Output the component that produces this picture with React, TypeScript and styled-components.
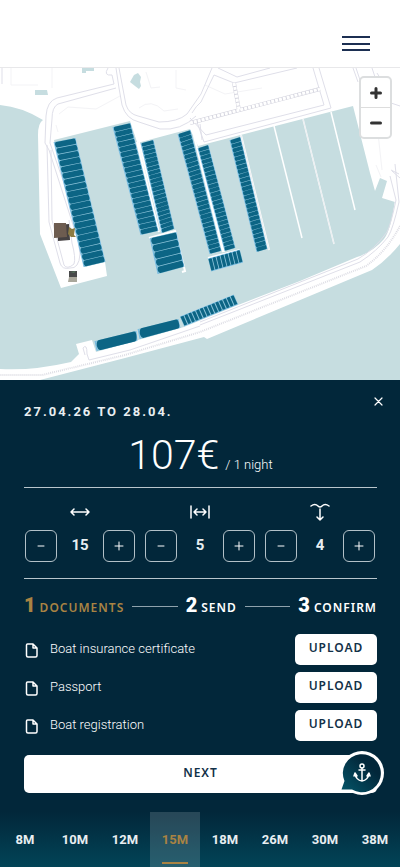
import React, { useState } from "react";
import styled, { createGlobalStyle, css } from "styled-components";

const navy = "#02273a";
const gold = "#a98343";

const GlobalStyle = createGlobalStyle`
  *, *::before, *::after { box-sizing: border-box; }
  body { margin: 0; background: ${navy}; font-family: Roboto, "Liberation Sans", sans-serif; color: #fff; }
  button { font: inherit; color: inherit; padding: 0; border: 0; background: none; cursor: pointer; }
  svg { display: block; }
`;

const Page = styled.div`
  display: flex;
  flex-direction: column;
  min-height: 100vh;
`;

const Header = styled.header`
  display: flex;
  justify-content: flex-end;
  padding: 36px 30px 16px;
  background: #fff;
  border-bottom: 1px solid #e8e8ea;
`;

const MenuButton = styled.button`
  display: flex;
  flex-direction: column;
  justify-content: space-between;
  width: 28px;
  height: 15px;
  span { height: 2px; background: #1c2f52; }
`;

const MapArea = styled.section`
  position: relative;
  background: #c6dde0;
`;

const MapSvg = styled.svg`
  width: 100%;
  height: auto;
`;

const ZoomGroup = styled.div`
  position: absolute;
  top: 8px;
  right: 8px;
  display: flex;
  flex-direction: column;
  border: 2px solid #dcdedf;
  border-radius: 5px;
  background: #fff;
  overflow: hidden;
`;

const ZoomButton = styled.button`
  display: grid;
  place-items: center;
  width: 29px;
  height: 29px;
  & + & { height: 30px; border-top: 1px solid #ddd; }
`;

const Panel = styled.main`
  position: relative;
  flex: 1;
  padding: 24px 23px 19px 24px;
  background: ${navy};
`;

const CloseButton = styled.button`
  position: absolute;
  top: 14px;
  right: 14px;
  padding: 3px;
`;

const Dates = styled.h1`
  margin: 0;
  font-size: 13px;
  font-weight: 700;
  line-height: 16px;
  letter-spacing: 2px;
  color: #e8eef1;
`;

const PriceRow = styled.p`
  display: flex;
  justify-content: center;
  align-items: baseline;
  gap: 6px;
  margin: 14px 0 1px;
  line-height: 42px;
`;

const Price = styled.strong`
  font-size: 41px;
  font-weight: 300;
`;

const Per = styled.span`
  font-size: 13px;
  font-weight: 300;
`;

const Rule = styled.hr`
  height: 1px;
  margin: 0;
  border: 0;
  background: #b9c6cc;
`;

const Dimensions = styled.div`
  display: grid;
  grid-template-columns: repeat(3, 1fr);
  gap: 10px;
  padding: 14px 2px 16px 1px;
`;

const Dimension = styled.div`
  display: grid;
  grid-template-columns: 32px 1fr 32px;
  row-gap: 8px;
  align-items: center;
  justify-items: center;
  svg { grid-column: 1 / -1; }
  output { font-size: 15px; font-weight: 700; line-height: 18px; padding-bottom: 2px; color: #e8eef1; }
`;

const StepButton = styled.button`
  display: grid;
  place-items: center;
  width: 32px;
  height: 32px;
  border: 1px solid #b3c1c8;
  border-radius: 6px;
  svg { grid-column: auto; }
`;

const Steps = styled.ol`
  display: flex;
  align-items: center;
  gap: 8px;
  margin: 0;
  padding: 14px 0 14px;
  list-style: none;
`;

const Step = styled.li<{ $active?: boolean }>`
  display: flex;
  align-items: baseline;
  gap: 4px;
  color: ${(p) => (p.$active ? gold : "#fff")};
  font-family: "Noto Sans", sans-serif;
  font-size: 12px;
  font-weight: 600;
  line-height: 24px;
  letter-spacing: 1px;
  b { font-family: Roboto, sans-serif; font-weight: 900; font-size: 20px; letter-spacing: 0; }
`;

const StepLine = styled.li`
  flex: 1;
  height: 1px;
  background: #8fa2ac;
`;

const Documents = styled.ul`
  display: grid;
  gap: 7px;
  margin: 0;
  padding: 0;
  list-style: none;
`;

const DocumentRow = styled.li`
  display: flex;
  align-items: center;
  gap: 11px;
  font-size: 13px;
  font-weight: 300;
  line-height: 20px;
  span { flex: 1; padding-bottom: 2px; }
`;

const whiteButton = css`
  border-radius: 5px;
  background: #fff;
  color: #123148;
  font-family: "Noto Sans", sans-serif;
  font-size: 12px;
  font-weight: 600;
  letter-spacing: 1px;
`;

const UploadButton = styled.button`
  ${whiteButton}
  width: 82px;
  height: 31px;
  padding-bottom: 3px;
`;

const NextButton = styled.button`
  ${whiteButton}
  display: block;
  width: 100%;
  height: 38px;
  margin-top: 14px;
  padding-bottom: 3px;
`;

const ChatButton = styled.button`
  position: absolute;
  right: 16px;
  bottom: 17px;
`;

const Tabs = styled.nav`
  display: grid;
  grid-template-columns: repeat(8, 1fr);
  background: linear-gradient(${navy}, #024457);
`;

const Tab = styled.button<{ $active: boolean }>`
  display: flex;
  flex-direction: column;
  align-items: center;
  justify-content: space-between;
  height: 55px;
  padding: 19px 0 3px;
  font-size: 13px;
  font-weight: 700;
  line-height: 18px;
  color: ${(p) => (p.$active ? gold : "#e8eef1")};
  background: ${(p) => (p.$active ? "rgba(255,255,255,0.15)" : "none")};
  &::after {
    content: "";
    width: 26px;
    height: 2px;
    background: ${(p) => (p.$active ? gold : "transparent")};
  }
`;

type Point = [number, number];
type Quad = [Point, Point, Point, Point];

const mix = (a: Point, b: Point, t: number): Point => [a[0] + (b[0] - a[0]) * t, a[1] + (b[1] - a[1]) * t];

// Boats are stacked along the quad's a→d side; each one lies from the a–d side to the b–c side.
function Berths({ quad, count, bow = 0.1, gap = 0.05 }: { quad: Quad; count: number; bow?: number; gap?: number }) {
  const [a, b, c, d] = quad;
  const boats = Array.from({ length: count }, (_, i) => {
    const t0 = (i + gap) / count;
    const t1 = (i + 1 - gap) / count;
    const p = (u: number, t: number) => mix(mix(a, b, u), mix(d, c, u), t).map((v) => v.toFixed(2)).join(" ");
    const m = (t0 + t1) / 2;
    return `M${p(0.02, m)}Q${p(0.03, t0)} ${p(bow, t0)}L${p(0.95, t0)}Q${p(1, t0)} ${p(1, m)}Q${p(1, t1)} ${p(0.95, t1)}L${p(bow, t1)}Q${p(0.03, t1)} ${p(0.02, m)}Z`;
  });
  return (
    <g>
      <polygon points={quad.join(" ")} fill="#8cc4da" />
      <path d={`M${a}L${d}M${b}L${c}`} stroke="#58aee6" strokeWidth="0.6" />
      <path d={boats.join("")} fill="#0c6585" />
    </g>
  );
}

const berths: { quad: Quad; count: number; bow?: number; gap?: number }[] = [
  { quad: [[54, 142], [75, 138], [105, 262], [84, 267]], count: 20 },
  { quad: [[113, 127], [130, 123], [158, 231], [141, 235]], count: 21 },
  { quad: [[141, 143], [153, 140], [174, 229], [162, 233]], count: 22 },
  { quad: [[178, 134], [190, 130], [221, 251], [210, 254]], count: 28 },
  { quad: [[198, 148], [208, 145], [235, 248], [225, 251]], count: 25 },
  { quad: [[230, 140], [240, 137], [267, 249], [257, 252]], count: 26 },
  { quad: [[150, 238], [176, 232], [184, 267], [158, 274]], count: 5, gap: 0.05 },
  { quad: [[211, 271], [208, 259], [240, 250], [243, 262]], count: 8, bow: 0.05, gap: 0.1 },
  { quad: [[184, 326], [180, 317], [234, 295], [238, 304]], count: 14, bow: 0.05, gap: 0.12 },
  { quad: [[95, 341], [136, 331], [137, 341], [97, 351]], count: 1, gap: 0.01 },
  { quad: [[138, 329], [178, 319], [180, 328], [140, 339]], count: 1, gap: 0.01 },
];

function HarbourMap() {
  return (
    <MapSvg viewBox="0 68 400 312" role="img" aria-label="Harbour map" fill="none">
      <rect y="68" width="400" height="312" fill="#c6dde0" />
      <g fill="#fff">
        <path d="M0 67H400V203L395 202L382 198L387 181L380 178L375 191L370 173L353 106L198 146L190 129L141 142L137 142L130 121L54 140L84 267L105 262L107 276L61 288L40 234L38 135Q38 123 43 120Q22 107 0 105Z" />
        <path d="M395 200Q391 230 384 239Q373 252 357 257L300 281L238 305L184 327L96 352L92 340L76 344L79 354L71 362Q32 371 0 369V380H40L125 358L204 337L207 339L372 270Q387 260 400 244V200Z" />
      </g>
      <g stroke="#fff" strokeWidth="2">
        <path d="M137 142L159 232M139 142L162 232M194 136L223 252M197 148L224 252M241 135L269 250M149 238L175 231L185 271L182 272M208 258L240 250" />
        <path d="M274 126L302 238M303 119L334 244M331 112L355 210" strokeWidth="1.5" />
      </g>
      <path d="M303 119L334 244M241 135L269 250" stroke="#d5dbe0" strokeWidth="0.5" />
      <g stroke="#f3f3f6" strokeWidth="1">
        <path d="M11 68V85H38M52 68V88M59 114L68 107L96 109L120 96M139 108Q151 98 164 111L178 109M146 72L151 88L160 87M176 70V88L186 90M56 125L58 132M205 85L225 94L262 88M374 96L382 170M376 165L381 177" />
      </g>
      <g stroke="#dfdfe9" strokeWidth="1">
        <path d="M116 68L119 88L122 105Q126 119 139 122L160 129Q181 131 196 116M119 68L126 105Q129 114 138 116L159 122Q178 122 187 114L201 94L212 68M108 68Q103 76 112 75L114 84L57 98Q47 101 46 116L45 143L49 150L74 228M116 88L58 104Q52 107 52 119L50 143L75 215L80 254Q79 269 70 268Q62 270 60 263L49 222L47 145M51 150L52 220L64 265Q67 270 74 264Q76 258 72 243L69 220M197 122L204 142L331 108L319 68M313 68L324 105L206 135L190 118M192 113Q196 106 201 102L214 75L234 83L297 68M218 68L237 77L270 68M353 68L358 82M356 68L362 86M372 68L376 80M390 176L396 200Q391 224 387 232Q375 249 358 259L200 322M395 164L399 202Q393 229 388 237Q377 251 360 262L200 325M85 355L83 348Q87 343 87 354L89 360L130 350L200 326" />
      </g>
      <g stroke="#dedee5" strokeWidth="2" strokeDasharray="1 1">
        <path d="M400 226Q386 252 366 266L200 332L125 355L42 375H0" />
      </g>
      <g>
        <path d="M190 123L320 89M234 83L239 110" stroke="#d5d5df" strokeWidth="4" />
        <path d="M190 123L320 89M234 83L239 110" stroke="#fff" strokeWidth="3" strokeDasharray="3 1" />
      </g>
      <g stroke="#dfdfe9">
        <path d="M200 124L202 140M377 73L385 86M391 170L399 174M392 171L400 178M2 68V84M391 103L400 106" />
      </g>
      <g fill="#c6dde0">
        <path d="M82 68H94V71H86V73H82ZM35 90H47L48 95H35ZM130 82L134 75L138 73L141 77L140 82L141 86L139 89L135 86Z" />
      </g>
      {berths.map((b, i) => (
        <Berths key={i} {...b} />
      ))}
      <g>
        <path d="M57 225L69 224L70 240L58 241Z" fill="#454142" />
        <path d="M54 223H66L67 237L54 238Z" fill="#6d5c50" />
        <path d="M69 227L72 229L75 228L74 235L76 237L71 237L68 234Z" fill="#8c7c43" />
        <path d="M69 271H77V281H69Z" fill="#48494a" />
        <path d="M69 277H77V282H68Z" fill="#a9a79b" />
        <path d="M70 272L76 271L74 273Z" fill="#54745c" />
      </g>
    </MapSvg>
  );
}

const Glyph = ({ w, h, d, sw = 1.5 }: { w: number; h: number; d: string; sw?: number }) => (
  <svg width={w} height={h} viewBox={`0 0 ${w} ${h}`} fill="none" stroke="currentColor" strokeWidth={sw} aria-hidden="true">
    <path d={d} strokeLinecap="round" strokeLinejoin="round" />
  </svg>
);

const dimensionIcons = [
  { name: "Length", start: 15, d: "M1 10H19M4 7L1 10L4 13M16 7L19 10L16 13" },
  { name: "Beam", start: 5, d: "M1 4V16M19 4V16M4 10H16M7 7L4 10L7 13M13 7L16 10L13 13" },
  { name: "Draught", start: 4, d: "M1 4Q5 1 8 4Q10 6 12 4Q15 1 19 4M10 7V18M7 15L10 18L13 15" },
];

function DimensionControl({ name, start, d }: { name: string; start: number; d: string }) {
  const [value, setValue] = useState(start);
  return (
    <Dimension role="group" aria-label={name}>
      <Glyph w={20} h={20} d={d} />
      <StepButton aria-label={`Decrease ${name}`} onClick={() => setValue(value - 1)}>
        <Glyph w={10} h={10} d="M2 5H8" sw={1} />
      </StepButton>
      <output>{value}</output>
      <StepButton aria-label={`Increase ${name}`} onClick={() => setValue(value + 1)}>
        <Glyph w={10} h={10} d="M1 5H9M5 1V9" sw={1} />
      </StepButton>
    </Dimension>
  );
}

const documents = ["Boat insurance certificate", "Passport", "Boat registration"];
const sizes = ["8M", "10M", "12M", "15M", "18M", "26M", "30M", "38M"];

export default function App() {
  const [size, setSize] = useState("15M");
  return (
    <Page>
      <GlobalStyle />
      <Header>
        <MenuButton aria-label="Menu">
          <span />
          <span />
          <span />
        </MenuButton>
      </Header>
      <MapArea>
        <HarbourMap />
        <ZoomGroup>
          <ZoomButton aria-label="Zoom in">
            <svg width="12" height="12" viewBox="0 0 12 12" stroke="#333" strokeWidth="3" strokeLinecap="round">
              <path d="M1.5 6H10.5M6 1.5V10.5" />
            </svg>
          </ZoomButton>
          <ZoomButton aria-label="Zoom out">
            <svg width="12" height="12" viewBox="0 0 12 12" stroke="#333" strokeWidth="3" strokeLinecap="round">
              <path d="M1.5 6H10.5" />
            </svg>
          </ZoomButton>
        </ZoomGroup>
      </MapArea>
      <Panel>
        <CloseButton aria-label="Close">
          <Glyph w={9} h={9} d="M1 1L8 8M8 1L1 8" sw={1.2} />
        </CloseButton>
        <Dates>27.04.26 TO 28.04.</Dates>
        <PriceRow>
          <Price>107€</Price>
          <Per>/ 1 night</Per>
        </PriceRow>
        <Rule />
        <Dimensions>
          {dimensionIcons.map((item) => (
            <DimensionControl key={item.name} {...item} />
          ))}
        </Dimensions>
        <Rule />
        <Steps>
          <Step $active>
            <b>1</b>DOCUMENTS
          </Step>
          <StepLine aria-hidden="true" />
          <Step>
            <b>2</b>SEND
          </Step>
          <StepLine aria-hidden="true" />
          <Step>
            <b>3</b>CONFIRM
          </Step>
        </Steps>
        <Documents>
          {documents.map((name) => (
            <DocumentRow key={name}>
              <Glyph w={15} h={16} d="M3.500 2H9L13 6V13.500Q13 15 11.500 15H4Q2.500 15 2.500 13.500V3Q2.500 2 3.500 2ZM9 2V6H13" />
              <span>{name}</span>
              <UploadButton aria-label={`UPLOAD ${name}`}>UPLOAD</UploadButton>
            </DocumentRow>
          ))}
        </Documents>
        <NextButton>NEXT</NextButton>
        <ChatButton aria-label="Chat">
          <svg width="46" height="44" viewBox="0 0 46 44" fill="none">
            <defs>
              <linearGradient id="bubble" x1="1" y1="0" x2="0" y2="1">
                <stop offset="0.3" stopColor={navy} />
                <stop offset="1" stopColor="#04566a" />
              </linearGradient>
            </defs>
            <circle cx="24" cy="22" r="22" fill="#fff" />
            <path d="M2 20L4 32L1 41L20 42Z" fill="#fff" />
            <path d="M14 38.500A19 19 0 1 0 6.500 30L3.500 38.500Z" fill="url(#bubble)" />
            <g stroke="#fff" strokeWidth="1.5" strokeLinecap="round" strokeLinejoin="round">
              <circle cx="24" cy="15" r="2" />
              <path d="M24 17V30M21 19H27M17 23Q18 29 24 30Q30 29 31 23M16 25L17 22L19 25M29 25L31 22L32 25" />
            </g>
          </svg>
        </ChatButton>
      </Panel>
      <Tabs aria-label="Berth length">
        {sizes.map((s) => (
          <Tab key={s} $active={s === size} aria-pressed={s === size} onClick={() => setSize(s)}>
            {s}
          </Tab>
        ))}
      </Tabs>
    </Page>
  );
}
